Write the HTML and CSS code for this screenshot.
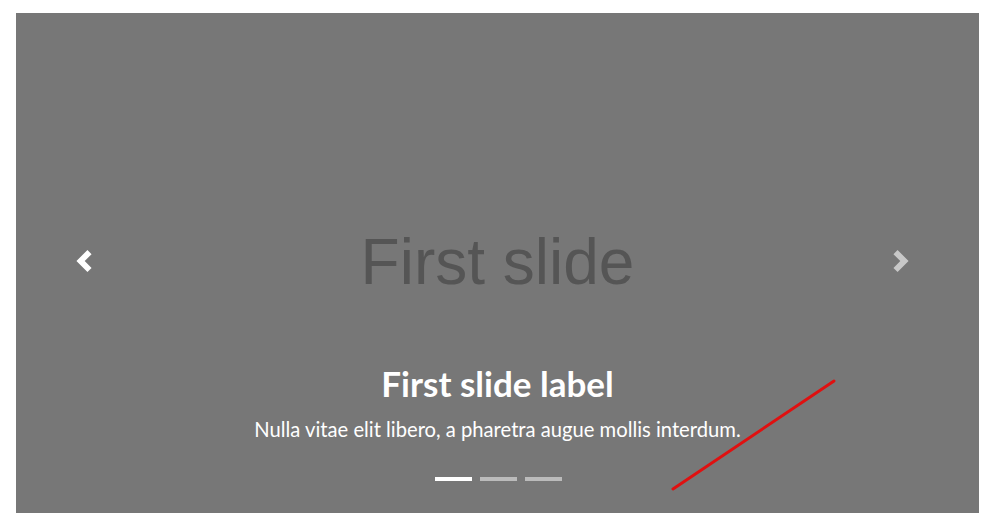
FILE: index.html
```html
<!DOCTYPE html>
<html lang="en">
<head>
<meta charset="utf-8">
<title>Carousel</title>
<link rel="stylesheet" href="styles.css">
</head>
<body>
<div class="page">
  <div class="carousel">
    <div class="slide">
      <span class="slide-text">First slide</span>
    </div>
    <a class="control control-prev" href="#" aria-label="Previous">
      <svg class="chevron" viewBox="0 0 8 8" width="22" height="22"><path d="M5.25 0l-4 4 4 4 1.5-1.5L4.25 4l2.5-2.5L5.25 0z" fill="currentColor"/></svg>
    </a>
    <a class="control control-next" href="#" aria-label="Next">
      <svg class="chevron" viewBox="0 0 8 8" width="22" height="22"><path d="M2.75 0l-1.5 1.5L3.75 4l-2.5 2.5L2.75 8l4-4-4-4z" fill="currentColor"/></svg>
    </a>
    <div class="caption">
      <h5 class="caption-title">First slide label</h5>
      <p class="caption-text">Nulla vitae elit libero, a pharetra augue mollis interdum.</p>
    </div>
    <ol class="indicators">
      <li class="indicator active"></li>
      <li class="indicator"></li>
      <li class="indicator"></li>
    </ol>
  </div>
</div>
<svg class="annotation" width="991" height="525" viewBox="0 0 991 525"><line x1="673" y1="489" x2="834" y2="381" stroke="#e01010" stroke-width="3" stroke-linecap="round"/></svg>
</body>
</html>
```
FILE: styles.css
```css
html, body {
  margin: 0;
  background: #fff;
}
.page {
  padding: 13px 12px 12px 16px;
}
.carousel {
  position: relative;
  width: 963px;
  height: 500px;
  background: #777;
  overflow: hidden;
}
.slide {
  height: 100%;
  display: flex;
  align-items: center;
  justify-content: center;
}
.slide-text {
  font-family: "Liberation Sans", Arial, sans-serif;
  font-size: 64px;
  color: #555;
  line-height: normal;
  margin-top: -2px;
}
.control {
  position: absolute;
  top: 237px;
  height: 22px;
  display: block;
}
.chevron {
  display: block;
}
.control-prev {
  left: 57px;
  color: #fff;
}
.control-next {
  left: 874px;
  color: #c8c8c8;
}
.caption {
  position: absolute;
  left: 0;
  right: 0;
  top: 349px;
  text-align: center;
  color: #fff;
  font-family: Lato, "Open Sans", sans-serif;
}
.caption-title {
  margin: 0;
  font-size: 35px;
  font-weight: 700;
  line-height: 1.2;
}
.caption-text {
  margin: 13px 0 0;
  font-size: 20.2px;
  line-height: 1.2;
}
.indicators {
  position: absolute;
  left: 0;
  right: 0;
  top: 464px;
  margin: 0;
  padding: 0 0 0 1px;
  list-style: none;
  display: flex;
  justify-content: center;
  gap: 8px;
}
.indicator {
  width: 37px;
  height: 4px;
  background: rgba(255, 255, 255, 0.5);
}
.indicator.active {
  background: #fff;
}
.annotation {
  position: absolute;
  left: 0;
  top: 0;
  pointer-events: none;
}
```
